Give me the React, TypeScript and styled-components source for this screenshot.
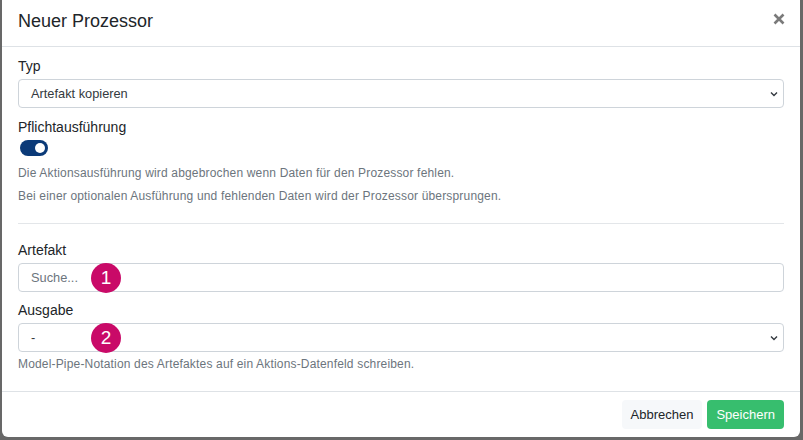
import React from "react";
import styled, { createGlobalStyle } from "styled-components";

const Global = createGlobalStyle`
  html, body { margin: 0; padding: 0; }
  body { font-family: "Liberation Sans", Arial, sans-serif; background: #6b6b6b; }
  * { box-sizing: border-box; }
`;

const Backdrop = styled.div`
  width: 803px;
  height: 440px;
  background: #686868;
  padding: 0 3px 0 2px;
  overflow: hidden;
`;

const Modal = styled.div`
  width: 798px;
  height: 437px;
  background: #fff;
  border-radius: 0 0 6px 6px;
  display: flex;
  flex-direction: column;
`;

const Header = styled.div`
  height: 47px;
  border-bottom: 1px solid #dee2e6;
  display: flex;
  align-items: center;
  justify-content: space-between;
  padding: 0 13px 0 16px;
`;

const Title = styled.h5`
  margin: 0 0 3px 0;
  font-size: 18px;
  font-weight: 400;
  color: #212529;
`;

const Close = styled.button`
  border: 0;
  background: none;
  padding: 0;
  width: 14px;
  height: 14px;
  margin-bottom: 7px;
  display: flex;
  cursor: pointer;
`;

const Body = styled.div`
  padding: 9px 16px 0 16px;
  flex: 1;
  display: flex;
  flex-direction: column;
`;

const Group = styled.div<{ $mb?: number }>`
  display: flex;
  flex-direction: column;
  margin-bottom: ${(p) => p.$mb ?? 9}px;
`;

const Label = styled.label`
  font-size: 14px;
  line-height: 20px;
  color: #212529;
  margin-bottom: 3px;
`;

const Field = styled.div`
  position: relative;
  height: 29px;
  border: 1px solid #ced4da;
  border-radius: 4px;
  display: flex;
  align-items: center;
  padding: 0 12px;
  font-size: 12.8px;
  color: #343a40;
`;

const Placeholder = styled.span`
  color: #6c757d;
`;

const Chevron = styled.svg`
  position: absolute;
  right: 5px;
  top: 11px;
`;

const Badge = styled.span`
  position: absolute;
  left: 72px;
  top: -1px;
  width: 30px;
  height: 30px;
  border-radius: 50%;
  background: #c90a68;
  color: #fff;
  font-size: 19px;
  display: flex;
  align-items: center;
  justify-content: center;
`;

const Toggle = styled.span`
  width: 28px;
  height: 16px;
  border-radius: 8px;
  background: #0b3a78;
  position: relative;
  margin: 0 0 6px 2px;
  &::after {
    content: "";
    position: absolute;
    right: 3px;
    top: 3px;
    width: 10px;
    height: 10px;
    border-radius: 50%;
    background: #fff;
  }
`;

const Help = styled.div<{ $mt?: number }>`
  font-size: 12px;
  line-height: 23px;
  color: #6c757d;
  letter-spacing: 0.17px;
  margin-top: ${(p) => p.$mt ?? 0}px;
`;

const Rule = styled.hr`
  border: 0;
  border-top: 1px solid #e3e6e9;
  margin: 15px 0 16px 0;
  width: 100%;
`;

const Footer = styled.div`
  height: 46px;
  border-top: 1px solid #dee2e6;
  display: flex;
  justify-content: flex-end;
  align-items: center;
  gap: 5px;
  padding: 0 16px 0 0;
`;

const Button = styled.button<{ $primary?: boolean }>`
  height: 29px;
  border: 0;
  border-radius: 4px;
  padding: 0 9px;
  font-family: inherit;
  font-size: 13px;
  background: ${(p) => (p.$primary ? "#37be6e" : "#f6f8fa")};
  color: ${(p) => (p.$primary ? "#fff" : "#212529")};
`;

const ChevronIcon = () => (
  <Chevron width="8" height="6" viewBox="0 0 8 6">
    <path d="M1 1.5 L4 4.5 L7 1.5" fill="none" stroke="#343a40" strokeWidth="1.4" />
  </Chevron>
);

export default function App() {
  return (
    <>
      <Global />
      <Backdrop>
        <Modal>
          <Header>
            <Title>Neuer Prozessor</Title>
            <Close aria-label="Schließen">
              <svg width="12" height="12" viewBox="0 0 12 12">
                <path d="M1.5 1.5 L10.5 10.5 M10.5 1.5 L1.5 10.5" stroke="#7a7a7a" strokeWidth="2.6" />
              </svg>
            </Close>
          </Header>
          <Body>
            <Group>
              <Label>Typ</Label>
              <Field>
                Artefakt kopieren
                <ChevronIcon />
              </Field>
            </Group>
            <Group $mb={0}>
              <Label>Pflichtausführung</Label>
              <Toggle />
              <Help>Die Aktionsausführung wird abgebrochen wenn Daten für den Prozessor fehlen.</Help>
              <Help>Bei einer optionalen Ausführung und fehlenden Daten wird der Prozessor übersprungen.</Help>
            </Group>
            <Rule />
            <Group $mb={8}>
              <Label>Artefakt</Label>
              <Field>
                <Placeholder>Suche...</Placeholder>
                <Badge>1</Badge>
              </Field>
            </Group>
            <Group $mb={0}>
              <Label>Ausgabe</Label>
              <Field>
                -
                <ChevronIcon />
                <Badge>2</Badge>
              </Field>
              <Help $mt={1}>Model-Pipe-Notation des Artefaktes auf ein Aktions-Datenfeld schreiben.</Help>
            </Group>
          </Body>
          <Footer>
            <Button>Abbrechen</Button>
            <Button $primary>Speichern</Button>
          </Footer>
        </Modal>
      </Backdrop>
    </>
  );
}
